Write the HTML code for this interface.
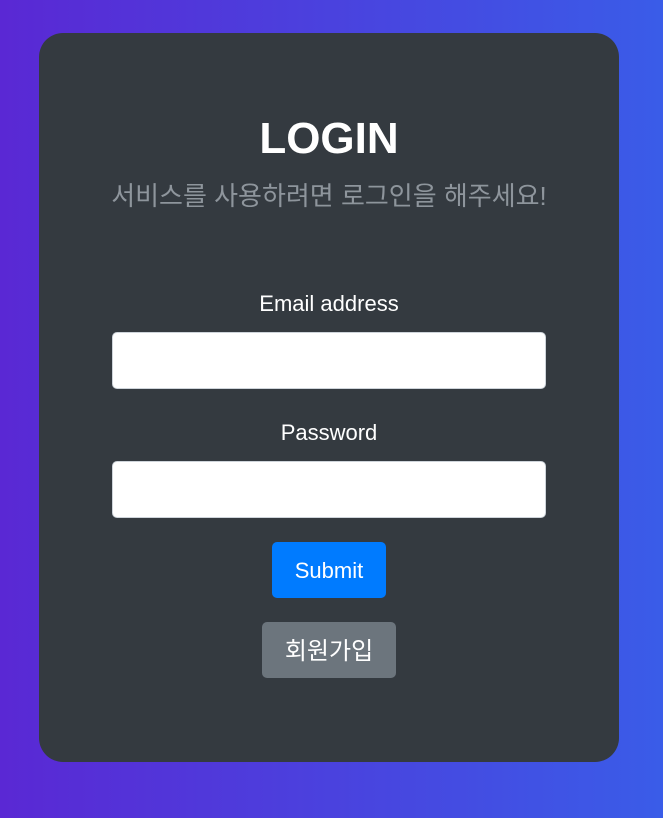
<!DOCTYPE html>
<html><head><meta charset="utf-8"><style>
html,body{margin:0;padding:0;}
body{width:663px;height:818px;background:linear-gradient(90deg,#5a28d4,#3a5ce8);font-family:"Liberation Sans","Noto Sans CJK KR",sans-serif;position:relative;overflow:hidden;}
.card{position:absolute;left:39px;top:33px;width:580px;height:729px;background:#343a40;border-radius:24px;}
.t{position:absolute;top:80px;left:0;width:100%;text-align:center;color:#fff;font-size:44px;font-weight:bold;line-height:52px;}
.s{position:absolute;top:145px;left:0;width:100%;text-align:center;color:#8e959c;font-size:26px;line-height:36px;}
.l{position:absolute;left:0;width:100%;text-align:center;color:#fff;font-size:22px;line-height:28px;}
.i{position:absolute;left:73px;width:432px;height:55px;background:#fff;border:1px solid #ced4da;border-radius:5px;}
.b{position:absolute;color:#fff;font-size:22px;text-align:center;line-height:58px;height:56px;border-radius:5px;}
</style></head><body>
<div class="card">
<div class="t">LOGIN</div>
<div class="s">서비스를 사용하려면 로그인을 해주세요!</div>
<div class="l" style="top:257px">Email address</div>
<div class="i" style="top:299px"></div>
<div class="l" style="top:386px">Password</div>
<div class="i" style="top:428px"></div>
<div class="b" style="left:233px;top:509px;width:114px;background:#007bff">Submit</div>
<div class="b" style="left:223px;top:589px;width:134px;background:#6c757d;font-size:24px;line-height:60px">회원가입</div>
</div>
</body></html>
